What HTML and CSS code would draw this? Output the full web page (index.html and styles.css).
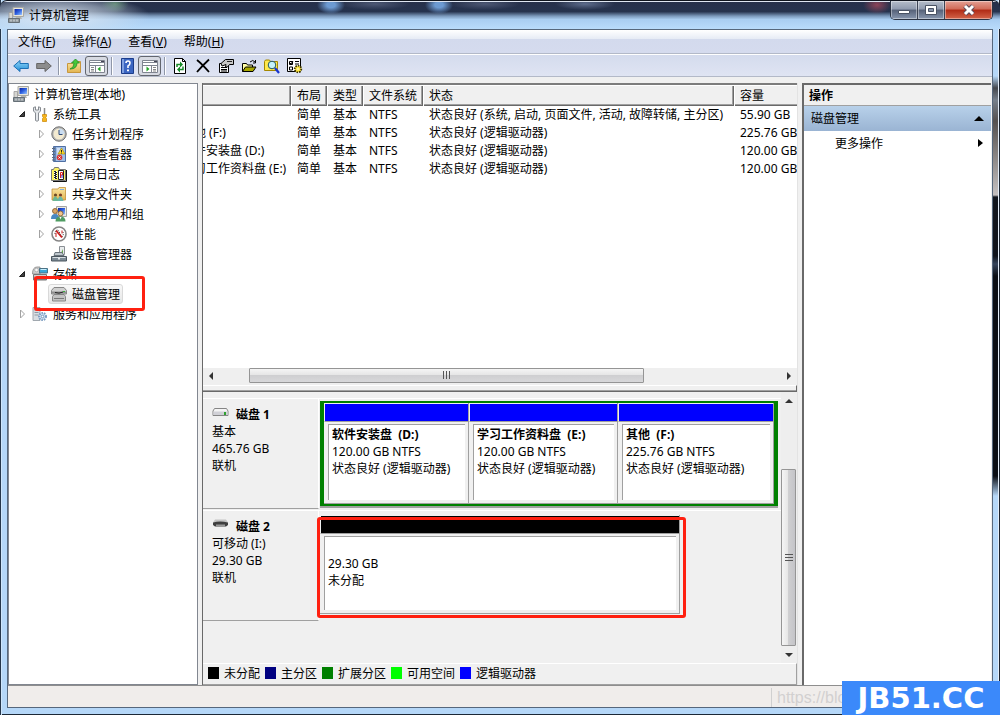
FILE: index.html
```html
<!DOCTYPE html>
<html lang="zh-CN">
<head>
<meta charset="utf-8">
<title>计算机管理</title>
<link rel="stylesheet" href="styles.css">
</head>
<body>
<svg class="defs" aria-hidden="true">
  <defs>
    <linearGradient id="screen" x1="0" y1="0" x2="1" y2="1"><stop offset="0" stop-color="#0a1fa0"/><stop offset=".5" stop-color="#2f62e0"/><stop offset="1" stop-color="#9cc8ff"/></linearGradient>
    <linearGradient id="metal" x1="0" y1="0" x2="0" y2="1"><stop offset="0" stop-color="#e4e4e4"/><stop offset="1" stop-color="#7d7d7d"/></linearGradient>
    <linearGradient id="sky" x1="0" y1="0" x2="0" y2="1"><stop offset="0" stop-color="#8fd4f8"/><stop offset="1" stop-color="#2590d8"/></linearGradient>
    <linearGradient id="folder" x1="0" y1="0" x2="0" y2="1"><stop offset="0" stop-color="#fbe7a4"/><stop offset="1" stop-color="#e2b450"/></linearGradient>
    <symbol id="computer" viewBox="0 0 16 16">
      <path d="M5 .5h10.500v9H5z" fill="#e8e6dc" stroke="#a8a8a2"/><path d="M6.500 2H14v6H6.500z" fill="url(#screen)"/><path d="M8 10h5l1 2H7z" fill="#b5b5b0"/>
      <path d="M1 5.500h3.500v6H1z" fill="#d6d6d2" stroke="#999" stroke-width=".8"/><path d="M.5 11.500h11v4H.5z" fill="#8f979c" stroke="#667077"/><path d="M3 12.500v2M6 12.500v2M9 12.500v2" stroke="#dfe4e7"/>
    </symbol>
    <symbol id="tools" viewBox="0 0 16 16">
      <path d="M1.500 1.500v3.500l2 2v7.500q1.500 1.500 3 0V7l2-2V1.500L6.500.8V4h-3V.8z" fill="#e4e7ea" stroke="#7b8087" stroke-width=".9"/>
      <path d="M12.500 2v7" stroke="#8b8b8b" stroke-width="1.500"/><path d="M10.500 8.500h4v2l-.8 1 .8 1v3h-4v-3l.8-1-.8-1z" fill="#f6b51d" stroke="#c98400" stroke-width=".7"/>
    </symbol>
    <symbol id="clock" viewBox="0 0 16 16">
      <circle cx="8" cy="8" r="7.200" fill="#b7b7b5" stroke="#707070"/><circle cx="8" cy="8" r="5.500" fill="#f3ead0"/><path d="M8 8V2.500A5.500 5.500 0 0 1 13.500 8z" fill="#c9dcf0"/><path d="M8 4v4.500h3.500" fill="none" stroke="#2c4b7d"/>
    </symbol>
    <symbol id="events" viewBox="0 0 16 16">
      <path d="M2.500.5h12v15h-12z" fill="#9fbde6" stroke="#4f6fa3"/><path d="M3 1h2v14H3z" fill="#6585b5"/><path d="M6 3h3M6 5h2M6 7h3" stroke="#fff"/><path d="M1 2.500h3M1 5.500h3M1 8.500h3M1 11.500h3M1 14h3" stroke="#5d6b7f"/>
      <path d="M10.500 2 14 8H7z" fill="#ffdb27" stroke="#a28400" stroke-width=".6"/><path d="M10.500 4v2M10.500 6.500v1" stroke="#222"/><circle cx="8.500" cy="11.500" r="2.800" fill="#d93434"/><path d="m7.500 10.500 2 2m0-2-2 2" stroke="#fff"/>
    </symbol>
    <symbol id="log" viewBox="0 0 16 16">
      <path d="M.5 3.500h2l1-2h4l1 2h6v11H.5z" fill="#fdf25f" stroke="#777"/><path d="M15.500 4v11.500H2" fill="none" stroke="#111"/><path d="M3 5h3v8H3z" fill="#222"/><path d="M3.500 6v7M5.500 5v7" stroke="#fff" stroke-dasharray="1 1"/><path d="M7.500 4.500h5v9h-5z" fill="#fff" stroke="#222"/><path d="M9.500 12V6.500h2v2.500h-2" stroke="#d22" fill="none"/><path d="M11 12V9" stroke="#33c"/>
    </symbol>
    <symbol id="share" viewBox="0 0 16 16">
      <path d="M1 3h6l1-1.500h6.500V4v10H1z" fill="url(#folder)" stroke="#c39137" stroke-width=".8"/><path d="M9 3.500h4" stroke="#7fb0e0"/><circle cx="4.500" cy="9" r="1.600" fill="#6d4b27"/><circle cx="9.500" cy="9" r="1.600" fill="#7b3d24"/><path d="M1.500 15q1-5 3-4.500t3 4.500z" fill="#6cb795"/><path d="M6.500 15q1-5 3-4.500t3 4.500z" fill="#69b7a8"/>
    </symbol>
    <symbol id="users" viewBox="0 0 16 16">
      <path d="M5.500.5h10v10h-10z" fill="#ecebe2" stroke="#a4a4a4"/><path d="M7 2h7v6.500H7z" fill="url(#screen)"/><circle cx="4" cy="5" r="2.500" fill="#dba565" stroke="#7d5526" stroke-width=".8"/><circle cx="9.500" cy="7.500" r="2.500" fill="#f0c48d" stroke="#7d5526" stroke-width=".8"/><path d="M0 13q0-5 4-5t4 5z" fill="#4a88c2"/><path d="M4.500 15.500q0-5 5-5t5 5z" fill="#4f9c62"/><path d="m8.500 11 1 2.500 1-2.500" fill="#fff"/>
    </symbol>
    <symbol id="perf" viewBox="0 0 16 16">
      <circle cx="8" cy="8" r="7" fill="#fff" stroke="#858585" stroke-width="1.600"/><path d="M4 8q0-4 3-4l4 7q2-2 1-5" fill="none" stroke="#333" stroke-dasharray="1 1"/><path d="M5 4.500 11 11.500" stroke="#c91c1c" stroke-width="1.800"/><path d="M5 7v4M11 4.500v3" stroke="#c91c1c"/>
    </symbol>
    <symbol id="device" viewBox="0 0 16 16">
      <path d="M8.500.5h5v8h-5z" fill="#e9ecee" stroke="#8a8f94"/><path d="M10 7 12 3v4" fill="#63a447"/><path d="M4 6.500h7l2 3H3z" fill="#bec6cc" stroke="#6a737b"/><path d="M.5 10.500h15v4.500H.5z" fill="#7d8a95" stroke="#4b565f"/><path d="M1.500 11.500h13" stroke="#d7dde1"/><path d="M7 11.500h2v2H7z" fill="#e3e8ec"/>
    </symbol>
    <symbol id="storage" viewBox="0 0 16 16">
      <path d="M.5 8q0-7 4.500-7h3v7z" fill="#cdcdcd" stroke="#888" stroke-width=".8"/><circle cx="4.500" cy="4" r="1.800" fill="#f7f7f7" stroke="#999" stroke-width=".6"/><path d="M7.500 2.500h8V7h-8z" fill="#38a6d8" stroke="#4c7386"/><path d="M8.500 3.500h6" stroke="#c9f0ff"/><path d="M1.500 8.500h13V14h-13z" fill="url(#metal)" stroke="#777"/><path d="M3 10.500h8" stroke="#eee"/><path d="M11.500 11h2v2h-2z" fill="#42c047"/>
    </symbol>
    <symbol id="disks" viewBox="0 0 16 16">
      <path d="M3 1.500h10l2.500 3v3.500H.5V4.500z" fill="#d0d0d0" stroke="#868686"/><path d="M1 5.500h14v2H1z" fill="#909090"/><path d="M3 8.500h10l1.500 2v4.500h-13v-4.500z" fill="#c3c3c3" stroke="#868686"/><path d="M4 6.500q4 1.500 8-.5" fill="none" stroke="#222"/><path d="M3 12.500h10" stroke="#777"/><path d="M12 5.500h2" stroke="#39ad3c"/>
    </symbol>
    <symbol id="services" viewBox="0 0 16 16">
      <path d="M1 1.500h7v13H1z" fill="#d8dde2" stroke="#a1a8af"/><path d="M2.500 4h4M2.500 6.500h4M2.500 9h4" stroke="#8d98a4"/><circle cx="10.500" cy="10.500" r="3.500" fill="#cfe0f2" stroke="#7d9ec2" stroke-width="2" stroke-dasharray="1.500 1"/><circle cx="10.500" cy="10.500" r="1.300" fill="#fff" stroke="#557da7" stroke-width=".7"/>
    </symbol>
    <symbol id="closed" viewBox="0 0 12 12"><path d="M4.500 2v8l4-4z" fill="#fff" stroke="#a2a2a2"/></symbol>
    <symbol id="open" viewBox="0 0 12 12"><path d="M8.500 3.500v5h-5z" fill="#404040" stroke="#222"/></symbol>
  </defs>
</svg>

<header class="titlebar">
  <svg class="icon"><use href="#computer"/></svg>
  <h1 class="title">计算机管理</h1>
  <div class="caption-buttons">
    <button class="caption" aria-label="最小化"><svg width="14" height="12" viewBox="0 0 14 12"><path d="M1.500 6.500h11v3h-11z" fill="#fff" stroke="#4a5364"/></svg></button>
    <button class="caption" aria-label="最大化"><svg width="14" height="12" viewBox="0 0 14 12"><path d="M1.500 1.500h11v9h-11z" fill="#fff" stroke="#4a5364"/><path d="M4.500 4.500h5v3h-5z" fill="#8794aa" stroke="#4a5364"/></svg></button>
    <button class="caption close" aria-label="关闭"><svg width="14" height="12" viewBox="0 0 14 12"><path d="m3 2 8 8m0-8-8 8" stroke="#5d4a58" stroke-width="5"/><path d="m3 2 8 8m0-8-8 8" stroke="#fff" stroke-width="3"/></svg></button>
  </div>
</header>

<div class="client">
  <nav class="menubar">
    <button class="menu">文件(<u>F</u>)</button>
    <button class="menu">操作(<u>A</u>)</button>
    <button class="menu">查看(<u>V</u>)</button>
    <button class="menu">帮助(<u>H</u>)</button>
  </nav>

  <div class="toolbar">
    <button class="tool" aria-label="后退"><svg class="icon" viewBox="0 0 16 16"><path d="M.7 8 7 2.500V5.500h8.300v5H7v3z" fill="url(#sky)" stroke="#1c70b5"/></svg></button>
    <button class="tool" aria-label="前进"><svg class="icon" viewBox="0 0 16 16"><path d="M15.300 8 9 2.500V5.500H.7v5H9v3z" fill="#8c8c8c" stroke="#666"/></svg></button>
    <span class="sep"></span>
    <button class="tool" aria-label="向上"><svg class="icon" viewBox="0 0 16 16"><path d="M1.500 5.500h5l1-2h7v11h-13z" fill="url(#folder)" stroke="#c7973e"/><path d="M4 11q4-1 4-6H5.500L9.500 1l4 4H11q0 6-7 6z" fill="#46c83a" stroke="#218a24" stroke-width=".8"/></svg></button>
    <button class="tool pressed" aria-label="显示/隐藏控制台树"><svg class="icon" viewBox="0 0 16 16"><path d="M.5 2.500h15v12H.5z" fill="#fff" stroke="#808590"/><path d="M1 4.500h14M1 7.500h14M6.500 8v6" stroke="#808590"/><path d="M2 9.500h3M2 11.500h3M2 13h3" stroke="#888"/><path d="M11.500 8.500v5L8.500 11z" fill="#27a327"/><path d="M12 3.500h3" stroke="#445"/></svg></button>
    <span class="sep"></span>
    <button class="tool" aria-label="帮助"><svg class="icon" viewBox="0 0 16 16"><path d="M2.500.5h12v15h-12z" fill="#3b66c2" stroke="#1c3d8b"/><path d="M3 1h2v14H3z" fill="#7fa0e0"/><path d="M7 5q0-2 2-2t2 2-2 3v2" fill="none" stroke="#fff" stroke-width="1.600"/><path d="M8 11.500h2v1.800H8z" fill="#fff"/></svg></button>
    <button class="tool pressed" aria-label="显示/隐藏操作窗格"><svg class="icon" viewBox="0 0 16 16"><path d="M.5 2.500h15v12H.5z" fill="#fff" stroke="#808590"/><path d="M1 4.500h14M1 7.500h14M9.500 8v6" stroke="#808590"/><path d="M11 9.500h3M11 11.500h3M11 13h3" stroke="#888"/><path d="M4.500 8.500v5l3-2.500z" fill="#27a327"/><path d="M12 3.500h3" stroke="#445"/></svg></button>
    <span class="sep"></span>
    <button class="tool" aria-label="刷新"><svg class="icon" viewBox="0 0 16 16"><path d="M2.500.5h8l3 3v12h-11z" fill="#fff" stroke="#000"/><path d="M10.500.5v3h3" fill="none" stroke="#000"/><path d="M5 9V6.500h4" fill="none" stroke="#168a26" stroke-width="1.500"/><path d="M8 3.500v6l3-3z" fill="#168a26"/><path d="M11 8.500v3H7" fill="none" stroke="#168a26" stroke-width="1.500"/><path d="M8 8.500v6l-3-3z" fill="#168a26"/></svg></button>
    <button class="tool" aria-label="删除"><svg class="icon" viewBox="0 0 16 16"><path d="M2 2q5 4 12 12M14 1.500Q8 7 2 14" fill="none" stroke="#000" stroke-width="1.800"/></svg></button>
    <button class="tool" aria-label="属性"><svg class="icon" viewBox="0 0 16 16"><path d="M1.500 5.500h9v9h-9z" fill="#fff" stroke="#000"/><path d="M3 9.500h6M3 11.500h6M3 13h6" stroke="#000"/><path d="M3 5.500 7.500 1.500h8v5h-4l-2 2.500H7.500L8 6.500 4 8z" fill="#c8c8c8" stroke="#000"/><path d="M9 3.500h5" stroke="#000" stroke-width=".8"/></svg></button>
    <button class="tool" aria-label="打开"><svg class="icon" viewBox="0 0 16 16"><path d="M1.500 13.500v-8h4l1 1.500h5v2" fill="#ffffa8" stroke="#000"/><path d="m1.500 13.500 3-4.500H15l-3 4.500z" fill="#a8a800" stroke="#000"/><path d="M9 4q3-3 5 0m.5-2v3H12" fill="none" stroke="#000"/></svg></button>
    <button class="tool" aria-label="查找"><svg class="icon" viewBox="0 0 16 16"><path d="M.5 12.500v-9l1-1.500h4l1 1.500h7v9z" fill="#ffe94d" stroke="#a48700"/><circle cx="8" cy="7" r="3.800" fill="#c5f2fa" stroke="#1f5561"/><path d="m11 10 4 5" stroke="#1734cf" stroke-width="2.200"/></svg></button>
    <button class="tool" aria-label="设置"><svg class="icon" viewBox="0 0 16 16"><path d="M.5.5h13v13H.5z" fill="#fff" stroke="#000"/><path d="M2.500 3.500h3v3h-3zM8 3.500h4M8 6h4M2.500 9h3v3h-3z" fill="none" stroke="#000"/><path d="m3 5 1 1 2-3" fill="none" stroke="#000"/><circle cx="11" cy="11" r="3.300" fill="#ffe743" stroke="#3c3500" stroke-width="1.800" stroke-dasharray="1.500 1"/><circle cx="11" cy="11" r="1.800" fill="#ffe743"/><circle cx="11" cy="11" r=".8" fill="#fff"/></svg></button>
  </div>

  <main class="panes">
    <ul class="tree">
      <li class="row root"><span class="node"><svg class="icon"><use href="#computer"/></svg>计算机管理(本地)</span></li>
      <li class="row branch"><svg class="twisty"><use href="#open"/></svg><span class="node"><svg class="icon"><use href="#tools"/></svg>系统工具</span></li>
      <li class="row leaf"><svg class="twisty"><use href="#closed"/></svg><span class="node"><svg class="icon"><use href="#clock"/></svg>任务计划程序</span></li>
      <li class="row leaf"><svg class="twisty"><use href="#closed"/></svg><span class="node"><svg class="icon"><use href="#events"/></svg>事件查看器</span></li>
      <li class="row leaf"><svg class="twisty"><use href="#closed"/></svg><span class="node"><svg class="icon"><use href="#log"/></svg>全局日志</span></li>
      <li class="row leaf"><svg class="twisty"><use href="#closed"/></svg><span class="node"><svg class="icon"><use href="#share"/></svg>共享文件夹</span></li>
      <li class="row leaf"><svg class="twisty"><use href="#closed"/></svg><span class="node"><svg class="icon"><use href="#users"/></svg>本地用户和组</span></li>
      <li class="row leaf"><svg class="twisty"><use href="#closed"/></svg><span class="node"><svg class="icon"><use href="#perf"/></svg>性能</span></li>
      <li class="row leaf"><svg class="twisty"></svg><span class="node"><svg class="icon"><use href="#device"/></svg>设备管理器</span></li>
      <li class="row branch"><svg class="twisty"><use href="#open"/></svg><span class="node"><svg class="icon"><use href="#storage"/></svg>存储</span></li>
      <li class="row leaf"><svg class="twisty"></svg><span class="node selected"><svg class="icon"><use href="#disks"/></svg>磁盘管理<span class="mark mark-node"></span></span></li>
      <li class="row branch"><svg class="twisty"><use href="#closed"/></svg><span class="node"><svg class="icon"><use href="#services"/></svg>服务和应用程序</span></li>
    </ul>

    <section class="center">
      <div class="volumes">
        <div class="volume-view">
          <table class="volume-table">
            <colgroup><col class="c-name"><col class="c-short"><col class="c-short"><col class="c-fs"><col class="c-state"><col class="c-size"></colgroup>
            <thead><tr><th></th><th>布局</th><th>类型</th><th>文件系统</th><th>状态</th><th>容量</th></tr></thead>
            <tbody>
              <tr><td>(C:)</td><td>简单</td><td>基本</td><td>NTFS</td><td>状态良好 (系统, 启动, 页面文件, 活动, 故障转储, 主分区)</td><td>55.90 GB</td></tr>
              <tr><td>其他 (F:)</td><td>简单</td><td>基本</td><td>NTFS</td><td>状态良好 (逻辑驱动器)</td><td>225.76 GB</td></tr>
              <tr><td>软件安装盘 (D:)</td><td>简单</td><td>基本</td><td>NTFS</td><td>状态良好 (逻辑驱动器)</td><td>120.00 GB</td></tr>
              <tr><td>学习工作资料盘 (E:)</td><td>简单</td><td>基本</td><td>NTFS</td><td>状态良好 (逻辑驱动器)</td><td>120.00 GB</td></tr>
            </tbody>
          </table>
        </div>
        <div class="hscroll">
          <button class="arrow" aria-label="向左滚动"><svg width="8" height="8" viewBox="0 0 8 8"><path d="M5 0v8L1 4z" fill="#333"/></svg></button>
          <span class="h-before"></span>
          <span class="h-thumb"><svg width="9" height="8" viewBox="0 0 9 8"><path d="M1.500 0v8M4.500 0v8M7.500 0v8" stroke="#555"/></svg></span>
          <span class="h-after"></span>
          <button class="arrow" aria-label="向右滚动"><svg width="8" height="8" viewBox="0 0 8 8"><path d="M2 0v8l4-4z" fill="#333"/></svg></button>
        </div>
        <div class="splitter"></div>
      </div>

      <div class="graphic">
        <div class="disk-view">
          <div class="disks">
            <div class="disk">
              <div class="disk-info">
                <h2 class="disk-name"><svg class="drive" viewBox="0 0 17 17"><path d="M2.500 2.500h12l1.500 2.500v4.500H1V5z" fill="#f4f4f4" stroke="#858585"/><path d="M1.500 5.500h14V9h-14z" fill="#d0d0d6"/><path d="M12 6h2v3h-2z" fill="#2fa12f"/></svg>磁盘 1</h2>
                <p>基本</p><p>465.76 GB</p><p>联机</p>
              </div>
              <div class="extended">
                <div class="partition logical"><div class="vol"><h3>软件安装盘&nbsp; (D:)</h3><p>120.00 GB NTFS</p><p>状态良好 (逻辑驱动器)</p></div></div>
                <div class="partition logical"><div class="vol"><h3>学习工作资料盘&nbsp; (E:)</h3><p>120.00 GB NTFS</p><p>状态良好 (逻辑驱动器)</p></div></div>
                <div class="partition logical"><div class="vol"><h3>其他&nbsp; (F:)</h3><p>225.76 GB NTFS</p><p>状态良好 (逻辑驱动器)</p></div></div>
              </div>
            </div>
            <div class="disk">
              <div class="disk-info">
                <h2 class="disk-name"><svg class="drive" viewBox="0 0 17 17"><path d="M3 1.500h11l2 3H1z" fill="#c4c4c4"/><path d="M1 4.500q7-2 15 0v2.500l-2 1.500H3L1 7z" fill="#3e3e3e"/><path d="M4 6.500h9v2H4z" fill="#999"/></svg>磁盘 2</h2>
                <p>可移动 (I:)</p><p>29.30 GB</p><p>联机</p>
              </div>
              <div class="partition unallocated"><div class="vol"><h3>&nbsp;</h3><p>29.30 GB</p><p>未分配</p></div><span class="mark mark-disk"></span></div>
            </div>
          </div>
          <div class="vscroll">
            <button class="arrow" aria-label="向上滚动"><svg width="8" height="8" viewBox="0 0 8 8"><path d="M0 6h8L4 2z" fill="#333"/></svg></button>
            <span class="v-before"></span>
            <span class="v-thumb"><svg width="8" height="9" viewBox="0 0 8 9"><path d="M0 1.500h8M0 4.500h8M0 7.500h8" stroke="#555"/></svg></span>
            <button class="arrow" aria-label="向下滚动"><svg width="8" height="8" viewBox="0 0 8 8"><path d="M0 2h8L4 6z" fill="#333"/></svg></button>
          </div>
        </div>
        <ul class="legend">
          <li class="key black">未分配</li>
          <li class="key navy">主分区</li>
          <li class="key green">扩展分区</li>
          <li class="key lime">可用空间</li>
          <li class="key blue">逻辑驱动器</li>
        </ul>
      </div>
    </section>

    <aside class="actions">
      <h2 class="actions-head">操作</h2>
      <button class="actions-group">磁盘管理<svg width="10" height="6" viewBox="0 0 10 6"><path d="M0 5h10L5 0z"/></svg></button>
      <button class="actions-item">更多操作<svg width="6" height="10" viewBox="0 0 6 10"><path d="M0 1v8l5-4z"/></svg></button>
    </aside>
  </main>

  <footer class="status"><span class="status-cell">https://blog</span></footer>
</div>
<div class="badge">JB51.CC</div>
</body>
</html>
```
FILE: styles.css
```css
* { box-sizing: border-box; }
body, h1, h2, h3, p, ul { margin: 0; padding: 0; }
h1, h2, h3, button, th { font: inherit; color: inherit; }
button { padding: 0; border: 0; background: none; }
ul { list-style: none; }
svg { display: block; flex: none; }

body {
  display: flex;
  flex-direction: column;
  height: 100vh;
  overflow: hidden;
  padding: 0 7px 7px;
  border: 0;
  background:
    linear-gradient(90deg, #26364a 0 1px, #cfe6fb 1px 2px, transparent 2px),
    linear-gradient(270deg, #1c2430 0 1px, #e4eefa 1px 2px, transparent 2px),
    linear-gradient(0deg, #1c2836 0 1px, transparent 1px),
    linear-gradient(#b5d7f8, #45484e 12px, #77808c 24px, #55504f 45px, #c4bfbf 119px, #12161e 121px, #10131b 180px, #36455c 188px, #0b0e15 200px, #0b0e15 400px, #b5d7f8 420px) right 76px / 7px 420px no-repeat,
    #b5d7f8;
  color: #000;
  font: 12px/17px "Noto Sans", "Noto Sans CJK SC", sans-serif;
}

.defs { position: absolute; width: 0; height: 0; }
.icon { width: 16px; height: 16px; }

/* Title bar */
.titlebar {
  display: flex;
  flex: none;
  align-items: center;
  gap: 5px;
  height: 29px;
  margin: 0 -7px;
  padding-left: 8px;
  border-top: 1px solid #10151e;
  border-radius: 7px 7px 0 0;
  background:
    linear-gradient(#dfe6f2 0 1px, transparent 1px),
    radial-gradient(ellipse 95px 22px at 55px 15px, rgba(225, 235, 247, .95), rgba(210, 225, 240, .5) 60%, transparent),
    radial-gradient(ellipse 14px 9px at 115px 3px, #4f7a62, transparent),
    radial-gradient(ellipse 14px 9px at 877px 4px, #8d4458, transparent),
    radial-gradient(ellipse 14px 9px at 331px 4px, #6c9ad2 30%, transparent),
    radial-gradient(ellipse 14px 9px at 439px 4px, #6c9ad2 30%, transparent),
    radial-gradient(ellipse 35px 6px at 375px 3px, #4d5874, transparent),
    radial-gradient(ellipse 35px 6px at 485px 3px, #4d5874, transparent),
    radial-gradient(ellipse 30px 6px at 585px 3px, #5d6c8c, transparent),
    linear-gradient(#27304a 0, #26334e 38%, #7c9abd 54%, #a9cdf1 66%, #b9dbfb);
}
.title { flex: 1; }
.caption-buttons {
  display: flex;
  align-self: flex-start;
  margin-right: 7px;
  border: 1px solid #2c3444;
  border-top: 0;
  border-radius: 0 0 5px 5px;
  overflow: hidden;
}
.caption {
  display: grid;
  place-items: center;
  width: 27px;
  height: 18px;
  border-right: 1px solid #3b4354;
  background: linear-gradient(#b5bdca, #8f9aae 45%, #566178 50%, #8897af);
  box-shadow: inset 0 0 0 1px rgba(255, 255, 255, .4);
}
.caption.close {
  width: 47px;
  border: 0;
  background: linear-gradient(#e4a094, #d16a57 45%, #b02a15 50%, #d4654a);
}

/* Client area */
.client {
  display: flex;
  flex: 1;
  flex-direction: column;
  min-height: 0;
  border: 1px solid #56677c;
  background: #f0f0f0;
}
.menubar {
  display: flex;
  flex: none;
  gap: 17px;
  height: 24px;
  padding-left: 10px;
  border-bottom: 1px solid #b3b9c8;
  background: linear-gradient(#fff, #e6ebf5 9px, #d3daed 9px, #d5dbee);
}
.toolbar {
  display: flex;
  flex: none;
  align-items: center;
  height: 23px;
  padding-left: 1px;
  border-top: 1px solid #fff;
  border-bottom: 1px solid #b3b9c8;
  background: linear-gradient(#d4dbed, #dfe4f3);
}
.tool {
  display: grid;
  place-items: center;
  width: 23px;
  height: 20px;
}
.tool.pressed {
  border: 1px solid #62666e;
  border-radius: 3px;
  background: #d7dae2;
}
.sep {
  width: 7px;
  height: 18px;
  background: linear-gradient(90deg, transparent 3px, #8f97a8 3px 4px, #fff 4px 5px, transparent 5px);
}
.panes {
  display: grid;
  flex: 1;
  grid-template-columns: 190px minmax(0, 1fr) 189px;
  gap: 4px;
  min-height: 0;
  padding: 6px 1px 0 0;
}

/* Console tree */
.tree {
  border: 1px solid #828790;
  background: #fff;
}
.row {
  display: flex;
  align-items: center;
  height: 20px;
}
.root { padding-left: 1px; }
.branch { padding-left: 7px; }
.leaf { padding-left: 26px; }
.twisty { width: 12px; height: 12px; margin-right: 1px; }
.node {
  position: relative;
  display: flex;
  align-items: center;
  gap: 5px;
  height: 20px;
  padding: 0 2px;
  border: 1px solid transparent;
}
.selected {
  z-index: 1;
  border-color: #d9d9d9;
  border-radius: 3px;
  background: linear-gradient(#f8f8f8, #e6e6e6);
}
.mark {
  position: absolute;
  border: 3px solid #ff2010;
  border-radius: 3px;
}
.mark-node { inset: -9px -23px -8px -15px; }

/* Volume list */
.center {
  display: flex;
  flex-direction: column;
  min-height: 0;
  border-left: 1px solid #696969;
  border-right: 1px solid #e3e3e3;
}
.volumes {
  display: flex;
  flex: 308 1 0;
  flex-direction: column;
  min-height: 0;
  border-top: 2px solid #7c7c7c;
  background: #fff;
}
.volume-view { flex: 1; overflow: hidden; }
.volume-table {
  width: 706px;
  margin-left: -30px;
  border-collapse: collapse;
  table-layout: fixed;
  white-space: nowrap;
}
.c-name { width: 118px; }
.c-short { width: 36px; }
.c-fs { width: 60px; }
.c-state { width: 311px; }
.volume-table th {
  height: 21px;
  padding: 0 0 0 6px;
  background: #f0f0f0;
  box-shadow: inset 1px 1px #fff, inset -1px -1px #696969, inset -2px -2px #a0a0a0;
  text-align: left;
}
.volume-table td {
  height: 18px;
  padding: 0 0 0 6px;
  line-height: 18px;
}
.volume-table td:first-child { padding-left: 9px; }
.arrow {
  display: grid;
  flex: none;
  place-items: center;
  width: 17px;
  height: 17px;
}
.hscroll {
  display: flex;
  flex: none;
  height: 17px;
  background: #efefef;
}
.h-before { flex: 29; }
.h-after { flex: 136; }
.h-thumb {
  display: grid;
  flex: 395;
  place-items: center;
  height: 15px;
  border: 1px solid #959595;
  border-radius: 1px;
  background: linear-gradient(#f5f5f5, #e6e6e6 45%, #cfcfd1 50%, #d8d8da);
}
.splitter {
  flex: none;
  height: 6px;
  border-top: 1px solid #fff;
  border-right: 1px solid #696969;
  background: linear-gradient(#f0f0f0 80%, #a0a0a0 80%);
}

/* Disk map */
.graphic {
  display: flex;
  flex: 294 1 0;
  flex-direction: column;
  min-height: 0;
  border-top: 1px solid #696969;
  border-bottom: 1px solid #a0a0a0;
  background: #f0f0f0;
}
.disk-view { display: flex; flex: 1; min-height: 0; }
.disks { flex: 1; padding-top: 6px; }
.disk {
  display: grid;
  grid-template-columns: 116px minmax(0, 1fr);
  height: 112px;
  border-top: 1px solid #fff;
}
.disk-info {
  height: 110px;
  padding: 7px 0 0 9px;
  border-right: 1px solid #fff;
  border-bottom: 1px solid #a0a0a0;
}
.disk-name { display: flex; gap: 7px; font-weight: 700; }
.drive { width: 17px; height: 17px; }
.extended {
  display: grid;
  grid-template-columns: 145fr 149fr 156fr;
  height: 105px;
  margin: 2px 3px 0 1px;
  border: solid #008000;
  border-width: 2px 4px;
  box-shadow: 0 2px #a0a0a0;
}
.partition {
  position: relative;
  display: flex;
  flex-direction: column;
  border: solid #a0a0a0;
  border-width: 0 1px 1px 0;
  background: #f0f0f0;
}
.partition::before {
  height: 17px;
  border: solid #f0f0f0;
  border-width: 1px 0 0 1px;
  border-bottom: 1px solid #a0a0a0;
  content: "";
}
.logical::before { background: #00f; }
.unallocated::before { background: #000; }
.unallocated {
  width: 78%;
  height: 99px;
  margin: 4px 0 0 1px;
}
.vol {
  flex: 1;
  margin: 2px 3px 3px 4px;
  padding: 1px 0 0 3px;
  border: solid #a0a0a0;
  border-width: 1px 0 0 1px;
  background: #fff;
  white-space: nowrap;
}
.vol h3 { font-weight: 700; }
.mark-disk { inset: 2px -7px -5px -3px; }

.vscroll {
  display: flex;
  flex-direction: column;
  width: 16px;
  padding-top: 1px;
  background: #eee;
}
.vscroll .arrow { width: 16px; }
.v-before { flex: 59; }
.v-thumb {
  display: grid;
  flex: 176;
  place-items: center;
  width: 15px;
  border: 1px solid #959595;
  border-radius: 1px;
  background: linear-gradient(90deg, #f5f5f5, #e6e6e6 45%, #cfcfd1 50%, #c4c4c8);
}
.legend {
  display: flex;
  flex: none;
  gap: 5px;
  height: 21px;
  padding: 0 0 2px 5px;
  border-top: 1px solid #fff;
  border-right: 1px solid #a0a0a0;
}
.key { display: flex; align-items: center; gap: 5px; }
.key::before { width: 11px; height: 12px; content: ""; }
.black::before { background: #000; }
.navy::before { background: #000080; }
.green::before { background: #008000; }
.lime::before { background: #0f0; }
.blue::before { background: #00f; }

/* Actions pane */
.actions {
  border: solid #696969;
  border-width: 2px 0 0 2px;
  background: #fff;
}
.actions-head {
  height: 21px;
  padding: 2px 0 0 5px;
  border-bottom: 1px solid #a0a0a0;
  background: #f0f0f0;
  font-weight: 700;
}
.actions-group, .actions-item {
  display: flex;
  align-items: center;
  justify-content: space-between;
  width: 100%;
  height: 25px;
  padding: 0 7px;
}
.actions-group { background: linear-gradient(#b8d1ea, #9ab4d3); }
.actions-item { height: 24px; padding-left: 31px; }

/* Status bar */
.status {
  display: flex;
  flex: none;
  justify-content: flex-end;
  height: 22px;
  padding-top: 2px;
  border-top: 1px solid #8e8e8e;
  background: #f0edeb;
}
.status-cell {
  width: 221px;
  padding-left: 5px;
  border-left: 1px solid #d0d0d0;
  color: #d2d0d0;
  font: 16px/19px "Liberation Sans", sans-serif;
}
.badge {
  position: fixed;
  right: 0;
  bottom: 0;
  width: 158px;
  height: 34px;
  background: #3b89fa;
  color: #fff;
  font: 700 29px/35px "DejaVu Sans", sans-serif;
  text-align: center;
}
```
